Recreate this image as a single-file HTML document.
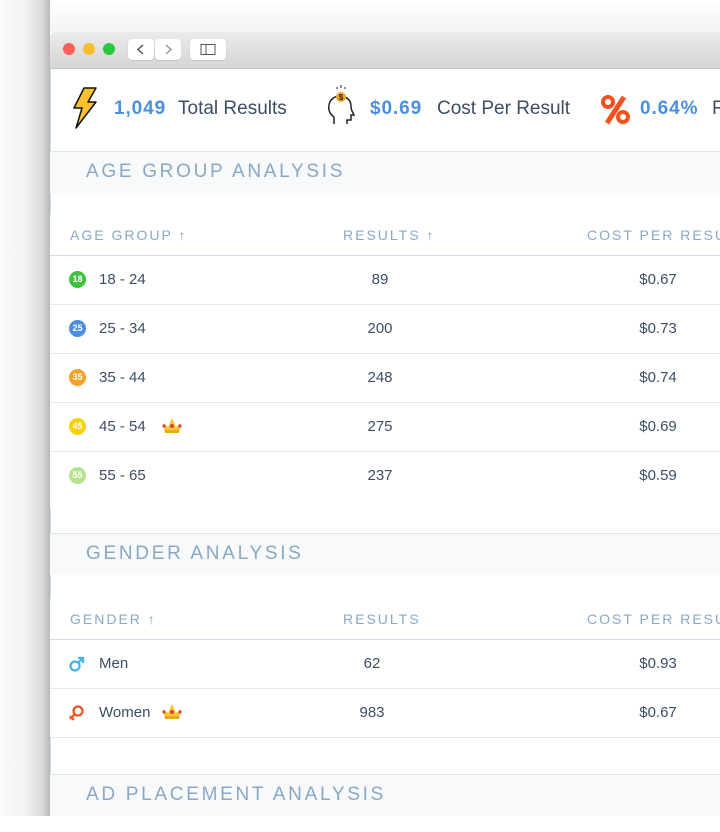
<!DOCTYPE html>
<html><head><meta charset="utf-8"><style>
*{margin:0;padding:0;box-sizing:border-box}
body{width:720px;height:816px;overflow:hidden;background:#fff;font-family:"Liberation Sans",Arial,sans-serif;position:relative}
.shadow{position:absolute;left:0;top:0;width:50px;height:816px;background:linear-gradient(to right,#fafafa 0%,#f3f3f3 50%,#d8d8d8 85%,#b8b8b8 100%)}
.topsh{position:absolute;left:0;top:0;width:720px;height:32px;background:linear-gradient(to bottom,#fff,#f4f4f4)}
.win{position:absolute;left:50px;top:32px;width:700px;height:800px;background:#fff;border-top-left-radius:6px;overflow:hidden}
.title{position:absolute;left:0;top:0;width:100%;height:37px;background:linear-gradient(#ebebeb,#d5d5d5);border-bottom:1px solid #c4c4c4}
.dot{position:absolute;top:11px;width:12px;height:12px;border-radius:50%}
.btn{position:absolute;top:7px;height:21px;background:#fff;border-radius:4px;box-shadow:0 0.5px 1px rgba(0,0,0,.2)}
.a{position:absolute;white-space:nowrap}
.num{color:#4a90e2;font-weight:bold;font-size:19px;letter-spacing:0.9px}
.lbl{color:#3d4d66;font-size:19px}
.sec{position:absolute;left:0;width:100%;height:42px;background:#f7f9fb;border-top:1px solid #dde6ee;color:#8aa8c4;font-size:19px;letter-spacing:2.7px;padding:9px 0 0 36px}
.th{position:absolute;color:#8aa8c4;font-size:14px;letter-spacing:2px}
.line{position:absolute;left:0;width:100%;height:1px;background:#e2eaf1}
.hline{position:absolute;left:0;width:100%;height:1px;background:#d3dfea}
.td{position:absolute;color:#3d4d66;font-size:15px}
.c{transform:translateX(-50%)}
.badge{position:absolute;width:17px;height:17px;border-radius:50%;color:#fff;font-size:9px;text-align:center;line-height:17px;font-weight:bold}
.lb{position:absolute;left:0;width:1px;background:#c8dcec}
</style></head><body>
<div class="topsh"></div>
<div class="shadow"></div>
<div class="win">
 <div class="title">
  <div class="dot" style="left:13px;background:#fc5f57"></div>
  <div class="dot" style="left:33px;background:#fdbc2e"></div>
  <div class="dot" style="left:53px;background:#28c840"></div>
  <div class="btn" style="left:78px;width:26px"><svg width="26" height="21"><path d="M15 6l-5 4.5 5 4.5" fill="none" stroke="#555" stroke-width="1.5"/></svg></div>
  <div class="btn" style="left:105px;width:26px"><svg width="26" height="21"><path d="M11 6l5 4.5-5 4.5" fill="none" stroke="#999" stroke-width="1.5"/></svg></div>
  <div class="btn" style="left:140px;width:36px"><svg width="36" height="21"><rect x="11" y="5.5" width="14" height="10" fill="none" stroke="#555"/><line x1="16" y1="5.5" x2="16" y2="15.5" stroke="#555"/></svg></div>
 </div>
 <div class="lb" style="top:37px;height:82px"></div>
 <svg class="a" style="left:20px;top:54px" width="30" height="44"><path d="M14 2h12l-8 14h8L6 42l6-20H4z" fill="#fbc02d" stroke="#111" stroke-width="1.5" stroke-linejoin="round"/></svg>
 <div class="a num" style="left:64px;top:66px">1,049</div>
 <div class="a lbl" style="left:128px;top:66px">Total Results</div>
 <svg class="a" style="left:275px;top:52px" width="32" height="44"><path d="M9 40v-7c-4-3-6-7-5-12 1-6 6-9 11-9 6 0 11 4 11 10 0 2 0 3 1 5l2 4h-3v5h-4v4" fill="none" stroke="#222" stroke-width="1.5"/><circle cx="16" cy="13" r="5" fill="#f5a623"/><text x="16" y="16" font-size="8" text-anchor="middle" fill="#222" font-weight="bold">$</text><path d="M12 3v2M16 1v3M20 3v2" stroke="#222"/></svg>
 <div class="a num" style="left:320px;top:66px">$0.69</div>
 <div class="a lbl" style="left:387px;top:66px">Cost Per Result</div>
 <svg class="a" style="left:550px;top:62px" width="32" height="32"><circle cx="8" cy="8" r="5" fill="none" stroke="#f4511e" stroke-width="4"/><circle cx="23" cy="23" r="5" fill="none" stroke="#f4511e" stroke-width="4"/><path d="M24 3L7 29" stroke="#f4511e" stroke-width="5"/></svg>
 <div class="a num" style="left:590px;top:66px">0.64%</div>
 <div class="a lbl" style="left:662px;top:66px">R</div>
 <div class="sec" style="top:119px">AGE GROUP ANALYSIS</div>
 <div class="lb" style="top:161px;height:22px"></div>
 <div class="th" style="left:20px;top:195px">AGE GROUP ↑</div>
 <div class="th" style="left:293px;top:195px">RESULTS ↑</div>
 <div class="th" style="left:537px;top:195px">COST PER RESULT</div>
 <div class="hline" style="top:223px"></div>
 <div class="badge" style="left:19px;top:239px;background:#3fc33f">18</div>
 <div class="td" style="left:49px;top:239px">18 - 24</div><div class="td c" style="left:330px;top:239px">89</div><div class="td c" style="left:608px;top:239px">$0.67</div>
 <div class="line" style="top:272px"></div>
 <div class="badge" style="left:19px;top:288px;background:#4a8fe0">25</div>
 <div class="td" style="left:49px;top:288px">25 - 34</div><div class="td c" style="left:330px;top:288px">200</div><div class="td c" style="left:608px;top:288px">$0.73</div>
 <div class="line" style="top:321px"></div>
 <div class="badge" style="left:19px;top:337px;background:#f3a322">35</div>
 <div class="td" style="left:49px;top:337px">35 - 44</div><div class="td c" style="left:330px;top:337px">248</div><div class="td c" style="left:608px;top:337px">$0.74</div>
 <div class="line" style="top:370px"></div>
 <div class="badge" style="left:19px;top:386px;background:#f7d20a">45</div>
 <div class="td" style="left:49px;top:386px">45 - 54</div>
 <svg class="a" style="left:111px;top:384px" width="22" height="18"><path d="M2 7l5 4 4-9 4 9 5-4-2 10H4z" fill="#f8c630"/><rect x="4" y="14" width="14" height="3" fill="#e9a81c"/><circle cx="3" cy="10" r="1.6" fill="#d9453a"/><circle cx="11" cy="10" r="2" fill="#d9453a"/><circle cx="19" cy="10" r="1.6" fill="#d9453a"/></svg>
 <div class="td c" style="left:330px;top:386px">275</div><div class="td c" style="left:608px;top:386px">$0.69</div>
 <div class="line" style="top:419px"></div>
 <div class="badge" style="left:19px;top:435px;background:#b5e48c">55</div>
 <div class="td" style="left:49px;top:435px">55 - 65</div><div class="td c" style="left:330px;top:435px">237</div><div class="td c" style="left:608px;top:435px">$0.59</div>
 <div class="lb" style="top:476px;height:26px"></div>
 <div class="sec" style="top:501px">GENDER ANALYSIS</div>
 <div class="lb" style="top:543px;height:24px"></div>
 <div class="th" style="left:20px;top:579px">GENDER ↑</div>
 <div class="th" style="left:293px;top:579px">RESULTS</div>
 <div class="th" style="left:537px;top:579px">COST PER RESULT</div>
 <div class="hline" style="top:607px"></div>
 <svg class="a" style="left:18px;top:623px" width="18" height="18"><circle cx="7" cy="11" r="4.5" fill="none" stroke="#3fb5e8" stroke-width="2.2"/><path d="M10 8l5-5M10 3h5v5" fill="none" stroke="#3fb5e8" stroke-width="2.2"/></svg>
 <div class="td" style="left:49px;top:623px">Men</div><div class="td c" style="left:322px;top:623px">62</div><div class="td c" style="left:608px;top:623px">$0.93</div>
 <div class="line" style="top:656px"></div>
 <svg class="a" style="left:18px;top:672px" width="18" height="18"><circle cx="10" cy="7" r="4.5" fill="none" stroke="#f4511e" stroke-width="2.2"/><path d="M7 10l-5 5M2 12l4 4" fill="none" stroke="#f4511e" stroke-width="2.2"/></svg>
 <div class="td" style="left:49px;top:672px">Women</div>
 <svg class="a" style="left:111px;top:670px" width="22" height="18"><path d="M2 7l5 4 4-9 4 9 5-4-2 10H4z" fill="#f8c630"/><rect x="4" y="14" width="14" height="3" fill="#e9a81c"/><circle cx="3" cy="10" r="1.6" fill="#d9453a"/><circle cx="11" cy="10" r="2" fill="#d9453a"/><circle cx="19" cy="10" r="1.6" fill="#d9453a"/></svg>
 <div class="td c" style="left:322px;top:672px">983</div><div class="td c" style="left:608px;top:672px">$0.67</div>
 <div class="line" style="top:705px"></div>
 <div class="lb" style="top:706px;height:36px"></div>
 <div class="sec" style="top:742px">AD PLACEMENT ANALYSIS</div>
</div>
</body></html>
